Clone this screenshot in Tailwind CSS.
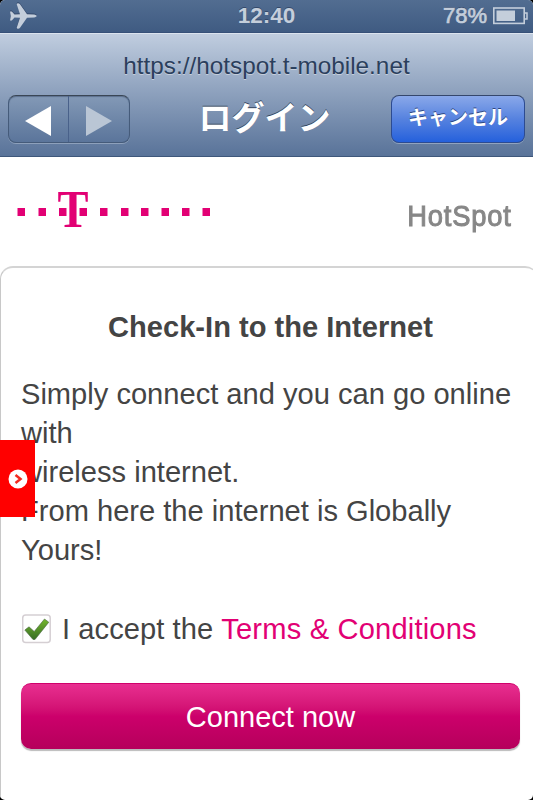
<!DOCTYPE html>
<html lang="ja">
<head>
<meta charset="utf-8">
<title>ログイン</title>
<script src="https://cdn.jsdelivr.net/npm/@tailwindcss/browser@4"></script>
</head>
<body class="bg-black">
<div class="relative flex h-[800px] w-[533px] flex-col overflow-hidden rounded-[5px] bg-white font-['Liberation_Sans','Noto_Sans_CJK_JP',sans-serif] text-[#444]">
  <header class="grid h-[33px] shrink-0 grid-cols-3 items-center border-b border-[#365078] bg-linear-to-b from-[#526d91] to-[#3f5b82] text-[#c4cedb]">
    <svg class="ml-[9px] h-[28px] w-[28px]" viewBox="0 0 28 28" fill="#c4cedb" style="filter:drop-shadow(0 -1px 0 #34496b)"><path d="M1 9.500h1.800l2.700 3 5.500-.2L7.800 2.500Q7.700 1.300 9 1.300T11 2.300L18 12.200l7 .3c3.500.6 3.500 2.400 0 3l-7 .3-7 9.900q-.7 1-2 1t-1.200-1.200L11 15.700l-5.500-.2-2.700 3H1L1.800 14z"/></svg>
    <span class="text-center text-[22.500px] font-bold leading-none [text-shadow:0_-1px_0_#34496b]">12:40</span>
    <div class="flex items-center justify-end gap-[6px] pr-[5px]">
      <span class="text-[22px] leading-none [-webkit-text-stroke:0.7px_#c4cedb] [text-shadow:0_-1px_0_#34496b]">78%</span>
      <svg class="h-[18px] w-[35px]" viewBox="0 0 35 18" fill="none"><rect x=".8" y="1" width="30.400" height="15.400" stroke="#c4cedb" stroke-width="1.600"/><rect x="3.500" y="3.500" width="18.500" height="10.500" fill="#c4cedb"/><path d="M32 6h2v6h-2" stroke="#c4cedb" stroke-width="1.500"/></svg>
    </div>
  </header>
  <nav class="flex h-[124px] shrink-0 flex-col border-t border-b border-t-[#dbe3ee] border-b-[#3e577b] bg-linear-to-b from-[#c0cddf] to-[#597399]">
    <div class="h-[61px] pt-[18px] text-center text-[24.3px] leading-[28px] text-[#2b3f5d] [text-shadow:0_1px_0_#c5cedb]">https://hotspot.t-mobile.net</div>
    <div class="flex h-[48px] items-center justify-between pr-[8px] pl-[8px]">
      <div class="flex h-[48px] w-[122px] rounded-[8px] border border-[#455b7a] border-t-[#3a4655] bg-linear-to-b from-[#8399b6] to-[#5b759b] shadow-[0_1px_0_#8da0bb,inset_0_1px_1px_#5c708e]">
        <div class="flex w-[60px] items-center justify-center border-r border-[#49618a]"><svg class="mt-[3px] h-[30px] w-[27px]" viewBox="0 0 27 30"><path d="M0 15L26 0v30z" fill="#fff"/></svg></div>
        <div class="flex flex-1 items-center justify-center"><svg class="mt-[3px] h-[30px] w-[27px]" viewBox="0 0 27 30"><path d="M26 15L0 0v30z" fill="#bac6d5"/></svg></div>
      </div>
      <h1 class="ml-[8px] text-[33px] font-bold leading-[48px] text-white [text-shadow:0_-1px_0_#354760]">ログイン</h1>
      <button class="h-[48px] w-[134px] rounded-[8px] border border-[#2c4b91] border-t-[#35476c] bg-linear-to-b from-[#8aa8e9] via-[#5682df] to-[#2460dc] pb-[2px] text-[20px] font-bold text-white shadow-[0_1px_0_#91a3bf] [text-shadow:0_-1px_0_#2d4683]">キャンセル</button>
    </div>
  </nav>
  <div class="flex h-[109px] shrink-0 justify-between pr-[21px] pl-[17px]">
    <svg class="mt-[23px] h-[62px] w-[195px]" viewBox="17 180 195 62" fill="#e20074">
      <path d="M17.500 208h7.500v8h-7.500zM38.500 208h7.500v8h-7.500zM59 208h7.500v8H59zM79.500 208H87v8h-7.500zM100 208h7.500v8H100zM121 208h7.500v8H121zM141 208h7.500v8H141zM161.500 208h7.500v8h-7.500zM182 208h7.500v8H182zM202.500 208h7.500v8h-7.500z"/>
      <text x="57.500" y="227" font-family="Liberation Serif, serif" font-size="52" font-weight="700" textLength="31" lengthAdjust="spacingAndGlyphs">T</text>
    </svg>
    <div class="mt-[41px] flex w-[103px] justify-end text-[30px] leading-[36px] text-[#878787] [-webkit-text-stroke:1px_#878787]"><span class="origin-right scale-x-[.91] tracking-[.9px]">HotSpot</span></div>
  </div>
  <main class="relative -mr-[5px] flex flex-1 flex-col rounded-t-[13px] border-t-2 border-l border-t-[#d4d4d4] border-l-[#c8c8c8] pr-[18px] pl-[20px] text-[29px]">
    <h2 class="mt-[40px] text-center text-[29.1px] font-bold leading-[39px]">Check-In to the Internet</h2>
    <p class="mt-[28px] text-[29.1px] leading-[39px] whitespace-nowrap">Simply connect and you can go online<br>with<br>wireless internet.<br>From here the internet is Globally<br>Yours!</p>
    <div class="mt-[40px] flex h-[39px] items-center">
      <svg class="mb-[2px] ml-[1px] h-[30px] w-[29px] shrink-0" viewBox="0 0 29 30"><defs><linearGradient id="tick" x2="0" y2="1"><stop stop-color="#75b72d"/><stop offset="1" stop-color="#376d25"/></linearGradient></defs><rect x=".7" y="1" width="27.500" height="27.500" rx="3" fill="#fff" stroke="#d5cfd3" stroke-width="1.500"/><path d="M2.800 16l4.200-3.200 5.200 4.700L22.500 5l4.300 3.200L13 25.500h-2z" fill="url(#tick)" stroke="#4a6843" stroke-width=".6" stroke-linejoin="round"/></svg>
      <span class="ml-[11px] whitespace-pre text-[29.1px] tracking-[.06px]">I accept the <a class="tracking-[.18px] text-[#e20074]">Terms &amp; Conditions</a></span>
    </div>
    <button class="mt-[34px] h-[66px] shrink-0 rounded-[10px] border-t border-[#cf006b] bg-linear-to-b from-[#e82e90] via-[#cc006b] to-[#b5005b] pt-[2px] text-[29px] text-white shadow-[0_2px_1px_#bbb]">Connect now</button>
  </main>
  <div class="absolute top-[440px] left-0 flex h-[77px] w-[35px] items-center justify-center bg-[#f00]">
    <svg class="h-[20px] w-[20px]" viewBox="0 0 20 20"><circle cx="10" cy="10" r="9.500" fill="#fff"/><path d="M7.500 6l5 4-5 4" fill="none" stroke="#f22a20" stroke-width="2.500"/></svg>
  </div>
</div>
</body>
</html>
